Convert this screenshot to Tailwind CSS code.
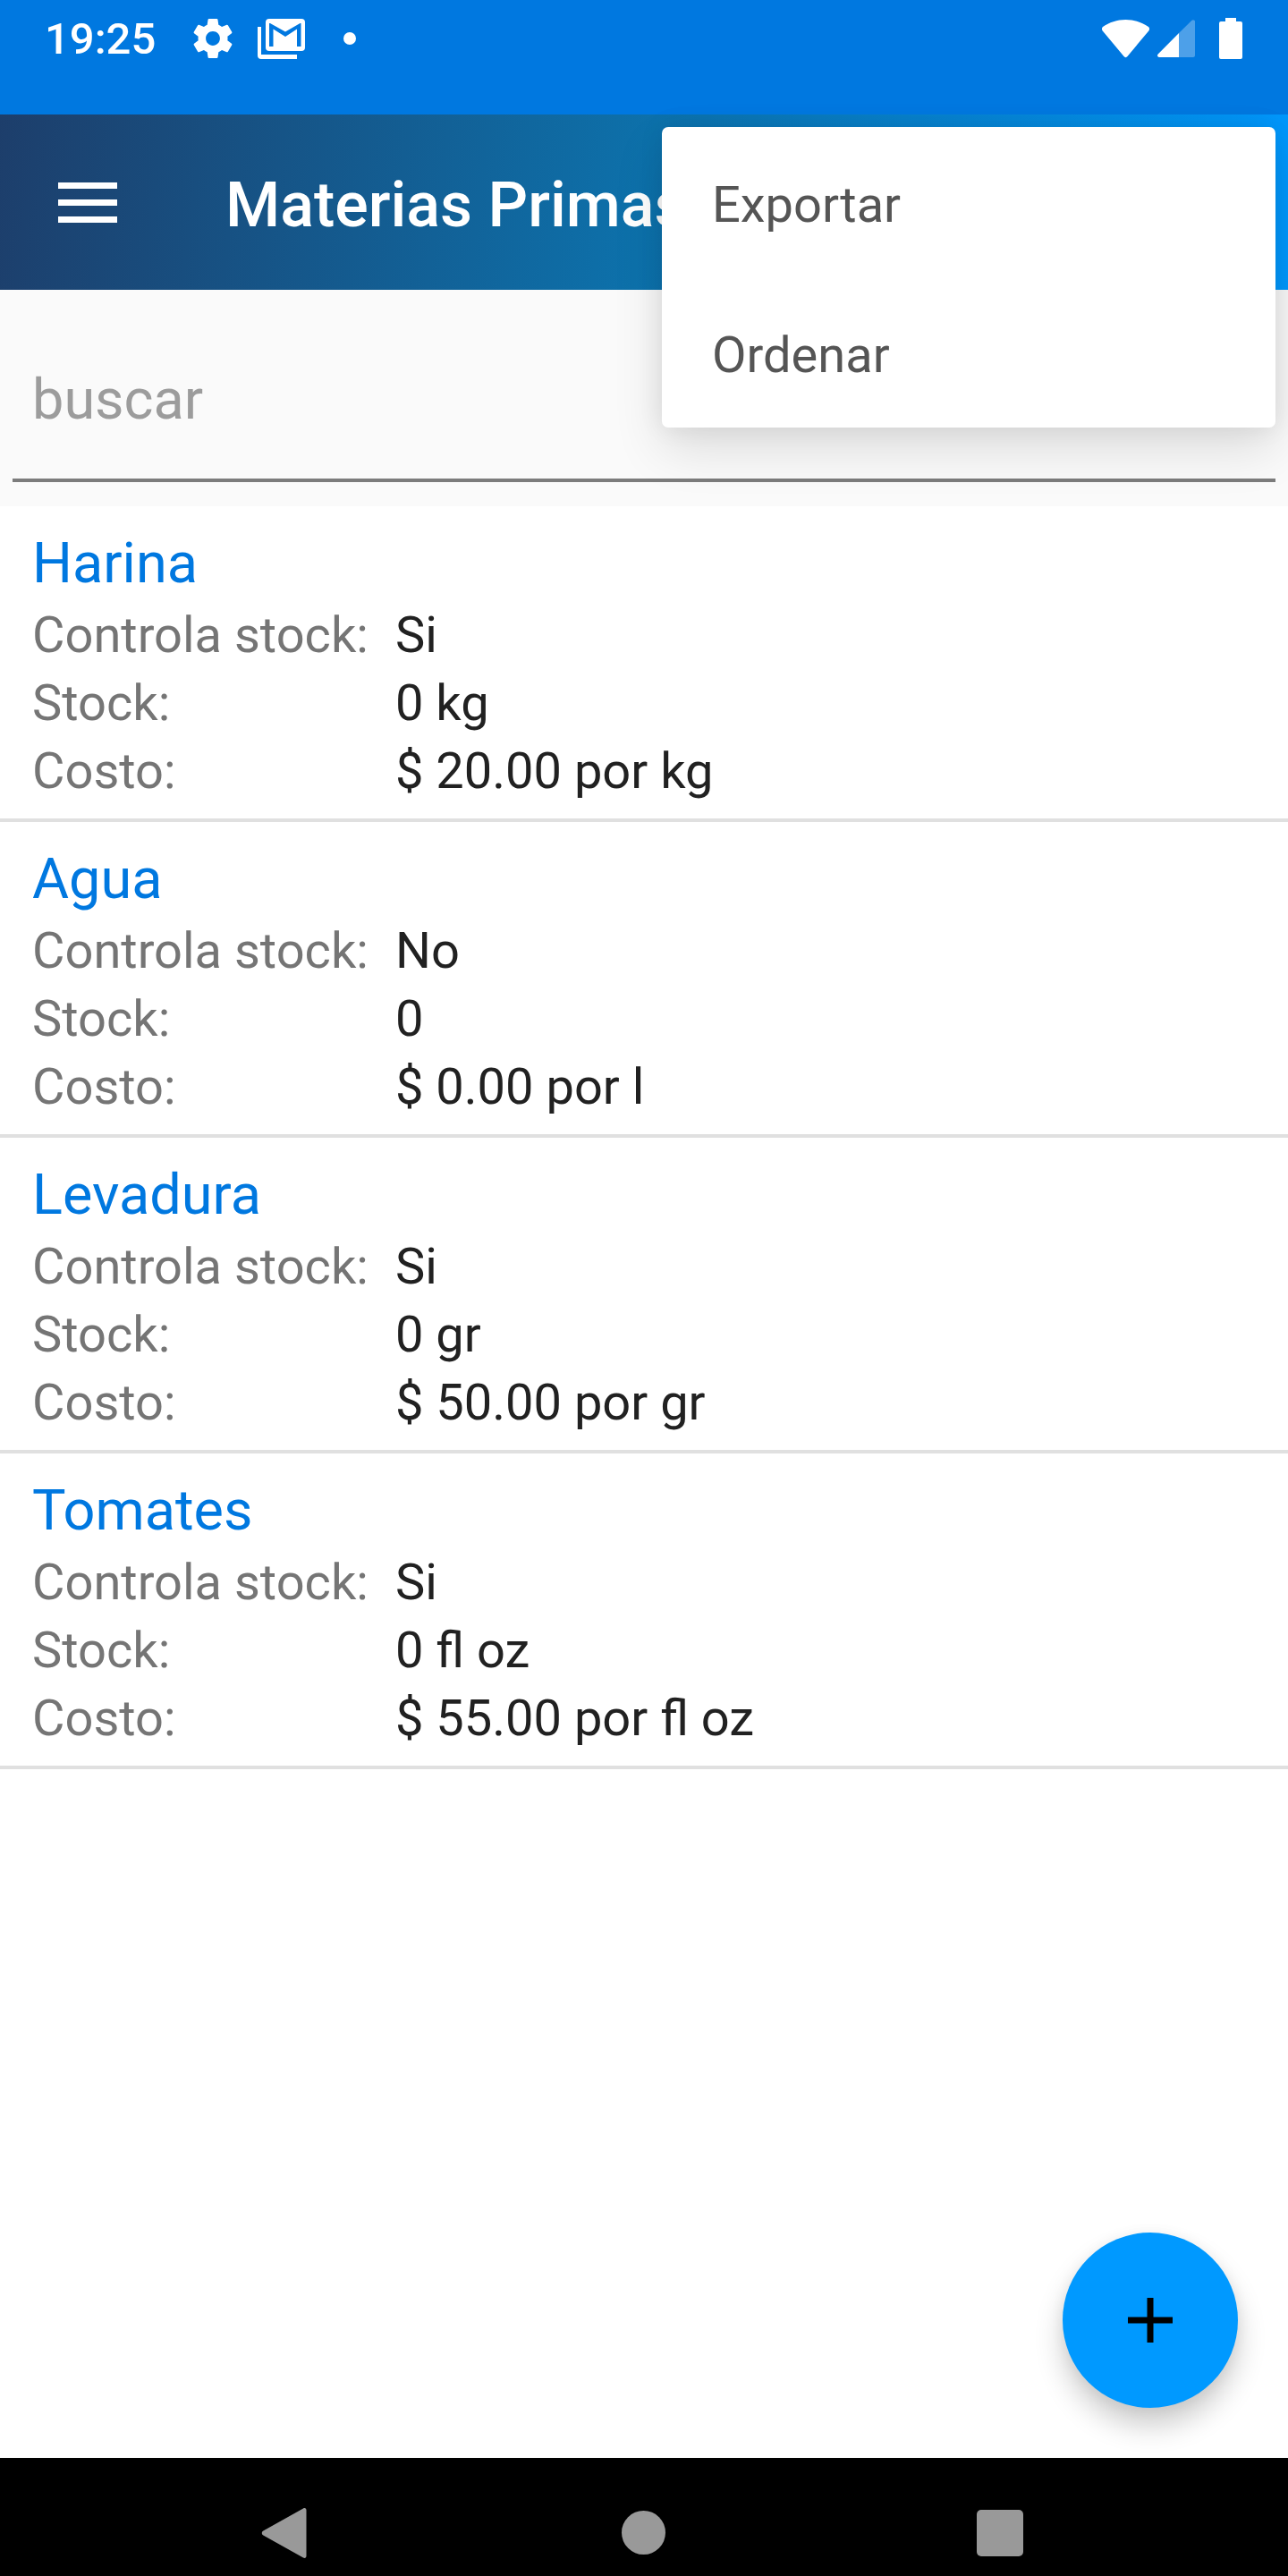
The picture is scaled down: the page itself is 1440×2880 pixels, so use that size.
<!DOCTYPE html>
<html lang="es">
<head>
  <meta charset="UTF-8" />
  <meta name="viewport" content="width=device-width, initial-scale=1.0"/>
  <title>Materias Primas</title>
  <script src="https://cdn.jsdelivr.net/npm/@tailwindcss/browser@4"></script>
</head>
<body class="bg-white font-[Roboto,sans-serif]">
  <div class="relative min-h-screen flex flex-col">

    <!-- Barra de estado -->
    <div class="h-32 bg-[#0078e0] text-white">
      <div class="h-[86px] pl-[50px] pr-[51px] flex items-center justify-between">
        <div class="flex items-center">
          <span class="pt-[2px] text-[49px] leading-[58px] font-medium">19:25</span>
          <svg class="ml-[42px] w-11 h-11" viewBox="2 2 20 20" fill="currentColor"><path d="M19.43 12.98c.04-.32.07-.64.07-.98s-.03-.66-.07-.98l2.11-1.65c.19-.15.24-.42.12-.64l-2-3.46c-.12-.22-.39-.3-.61-.22l-2.49 1c-.52-.4-1.08-.73-1.69-.98l-.38-2.65C14.46 2.18 14.25 2 14 2h-4c-.25 0-.46.18-.49.42l-.38 2.65c-.61.25-1.17.59-1.69.98l-2.49-1c-.23-.09-.49 0-.61.22l-2 3.46c-.13.22-.07.49.12.64l2.11 1.65c-.04.32-.07.65-.07.98s.03.66.07.98l-2.11 1.65c-.19.15-.24.42-.12.64l2 3.46c.12.22.39.3.61.22l2.49-1c.52.4 1.08.73 1.69.98l.38 2.65c.03.24.24.42.49.42h4c.25 0 .46-.18.49-.42l.38-2.65c.61-.25 1.17-.59 1.69-.98l2.49 1c.23.09.49 0 .61-.22l2-3.46c.12-.22.07-.49-.12-.64l-2.11-1.65zM12 15.6c-1.98 0-3.6-1.62-3.6-3.6s1.62-3.6 3.6-3.6 3.6 1.62 3.6 3.6-1.62 3.6-3.6 3.6z"/></svg>
          <svg class="ml-7 w-[53px] h-[45px]" viewBox="0 0 53 45">
            <rect x="9" y="0" width="44" height="36" rx="4" fill="#fff"/>
            <path d="M13 31V5h1l17 9.500L47.500 5h1v26H44V11.500L31 20l-13.500-8.500V31z" fill="#0078e0"/>
            <path d="M0 9h4v31h40v5H4c-2.500 0-4-1.500-4-4z" fill="#fff"/>
          </svg>
          <span class="ml-[43px] w-[14px] h-[14px] rounded-full bg-white"></span>
        </div>
        <div class="flex items-center">
          <svg class="w-[53px] h-[43px]" viewBox="0 0 53 43" fill="currentColor"><path d="M1 8C8 3 17 0 26.500 0S45 3 52 8c1.200 1 1.400 3 .5 4.200L28.500 41c-1 1.500-3 1.500-4 0L.5 12.200C-.4 11-.2 9 1 8z"/></svg>
          <svg class="ml-[9px] w-[42px] h-[42px]" viewBox="0 0 42 42" fill="currentColor">
            <path d="M24 15L38.500 .7C40 -.5 42 .5 42 2v38c0 1-1 2-2 2H24z" opacity=".3"/>
            <path d="M24 15v27H2c-2 0-2.600-2.200-1.300-3.500z"/>
          </svg>
          <svg class="ml-[27px] w-[26px] h-[46px]" viewBox="0 0 26 46" fill="currentColor"><path d="M7 0h12v4h5q2 0 2 2v38q0 2-2 2H2q-2 0-2-2V6q0-2 2-2h5z"/></svg>
        </div>
      </div>
    </div>

    <!-- Barra de la app -->
    <header class="h-[196px] pl-[65px] flex items-center bg-[linear-gradient(98deg,#1d3e6b,#0d71ab_50%,#0099ff)] text-white">
      <button type="button" aria-label="Menú">
        <svg class="w-[66px] h-[46px]" viewBox="0 0 66 46" fill="currentColor"><path d="M0 1h66v7H0zM0 20h66v7H0zM0 39h66v7H0z"/></svg>
      </button>
      <h1 class="pl-[121px] pt-[6px] text-[70px] leading-[84px] font-medium">Materias Primas</h1>
    </header>

    <!-- Buscador -->
    <div class="bg-[#fafafa] px-[14px] pt-[34px] pb-[27px]">
      <input type="text" aria-label="buscar" placeholder="buscar" class="block w-full h-[181px] pl-[22px] text-[63px] text-[#212121] placeholder:text-[#9c9c9c] border-b-4 border-[#7c7c7c] outline-none" />
    </div>

    <!-- Lista -->
    <main class="relative flex-1">
      <ul>
        <li class="px-9 pt-[22px] pb-[15px] border-b-4 border-[#e0e0e0]">
          <h2 class="text-[63px] leading-[84px] text-[#0078e0]">Harina</h2>
          <dl class="grid grid-cols-[406px_1fr] text-[56px] leading-[76px] text-[#212121]">
            <dt class="text-[#757575]">Controla stock:</dt><dd>Si</dd>
            <dt class="text-[#757575]">Stock:</dt><dd>0 kg</dd>
            <dt class="text-[#757575]">Costo:</dt><dd>$ 20.00 por kg</dd>
          </dl>
        </li>
        <li class="px-9 pt-[22px] pb-[15px] border-b-4 border-[#e0e0e0]">
          <h2 class="text-[63px] leading-[84px] text-[#0078e0]">Agua</h2>
          <dl class="grid grid-cols-[406px_1fr] text-[56px] leading-[76px] text-[#212121]">
            <dt class="text-[#757575]">Controla stock:</dt><dd>No</dd>
            <dt class="text-[#757575]">Stock:</dt><dd>0</dd>
            <dt class="text-[#757575]">Costo:</dt><dd>$ 0.00 por l</dd>
          </dl>
        </li>
        <li class="px-9 pt-[22px] pb-[15px] border-b-4 border-[#e0e0e0]">
          <h2 class="text-[63px] leading-[84px] text-[#0078e0]">Levadura</h2>
          <dl class="grid grid-cols-[406px_1fr] text-[56px] leading-[76px] text-[#212121]">
            <dt class="text-[#757575]">Controla stock:</dt><dd>Si</dd>
            <dt class="text-[#757575]">Stock:</dt><dd>0 gr</dd>
            <dt class="text-[#757575]">Costo:</dt><dd>$ 50.00 por gr</dd>
          </dl>
        </li>
        <li class="px-9 pt-[22px] pb-[15px] border-b-4 border-[#e0e0e0]">
          <h2 class="text-[63px] leading-[84px] text-[#0078e0]">Tomates</h2>
          <dl class="grid grid-cols-[406px_1fr] text-[56px] leading-[76px] text-[#212121]">
            <dt class="text-[#757575]">Controla stock:</dt><dd>Si</dd>
            <dt class="text-[#757575]">Stock:</dt><dd>0 fl oz</dd>
            <dt class="text-[#757575]">Costo:</dt><dd>$ 55.00 por fl oz</dd>
          </dl>
        </li>
      </ul>

      <button type="button" aria-label="Agregar" class="absolute right-14 bottom-14 w-[196px] h-[196px] rounded-full bg-[#0099ff] text-black flex items-center justify-center shadow-[0_20px_32px_rgba(0,0,0,0.2),0_2px_16px_rgba(0,0,0,0.06)]">
        <svg class="w-[50px] h-[50px]" viewBox="0 0 50 50" fill="currentColor"><path d="M21.500 0h7v21.500H50v7H28.500V50h-7V28.500H0v-7h21.500z"/></svg>
      </button>
    </main>

    <!-- Navegación -->
    <nav class="h-[132px] pt-9 px-30 bg-black text-[#999999] grid grid-cols-3 items-center justify-items-center">
      <button type="button" aria-label="Atrás"><svg class="w-14 h-14" viewBox="0 0 56 56" fill="currentColor"><path d="M2.300 25.500L47 .6c2-1.200 3.500 0 3.500 2v50.800c0 2-1.500 3.200-3.500 2L2.300 30.500c-2-1.200-2-3.800 0-5z"/></svg></button>
      <button type="button" aria-label="Inicio"><svg class="w-14 h-14" viewBox="0 0 56 56" fill="currentColor"><circle cx="27.500" cy="27.500" r="24.500"/></svg></button>
      <button type="button" aria-label="Recientes"><svg class="w-14 h-14" viewBox="0 0 56 56" fill="currentColor"><rect x="0" y="2" width="52" height="52" rx="5"/></svg></button>
    </nav>

    <!-- Menú desplegable -->
    <div role="menu" class="absolute top-[142px] right-[14px] w-[686px] bg-white rounded-[7px] text-[56px] text-[#555555] shadow-[0_24px_56px_rgba(0,0,0,0.12),0_0_28px_rgba(0,0,0,0.08)]">
      <button type="button" role="menuitem" class="block w-full h-[168px] pt-[6px] pl-14 text-left">Exportar</button>
      <button type="button" role="menuitem" class="block w-full h-[168px] pt-[6px] pl-14 text-left">Ordenar</button>
    </div>

  </div>
</body>
</html>
